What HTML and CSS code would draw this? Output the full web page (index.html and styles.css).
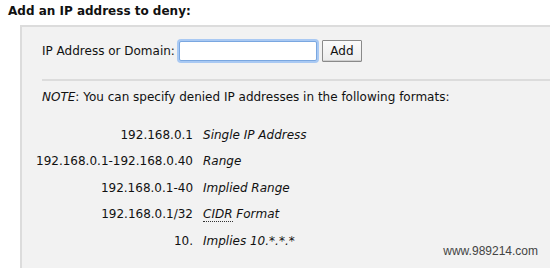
FILE: index.html
```html
<!DOCTYPE html>
<html>
<head>
<meta charset="utf-8">
<link rel="stylesheet" href="styles.css">
</head>
<body>
<h3 class="title">Add an IP address to deny:</h3>
<div class="panel">
  <div class="form-row">
    <label class="label">IP Address or Domain:</label>
    <input class="ip-input" type="text">
    <button class="add-btn">Add</button>
  </div>
  <hr class="rule">
  <p class="note"><em>NOTE</em>: You can specify denied IP addresses in the following formats:</p>
  <table class="formats">
    <tr><td class="ip">192.168.0.1</td><td class="desc">Single IP Address</td></tr>
    <tr><td class="ip">192.168.0.1-192.168.0.40</td><td class="desc">Range</td></tr>
    <tr><td class="ip">192.168.0.1-40</td><td class="desc">Implied Range</td></tr>
    <tr><td class="ip">192.168.0.1/32</td><td class="desc"><abbr class="abbr">CIDR</abbr> Format</td></tr>
    <tr><td class="ip">10.</td><td class="desc">Implies 10.*.*.*</td></tr>
  </table>
</div>
<div class="watermark">www.989214.com</div>
</body>
</html>
```
FILE: styles.css
```css
html, body {
  margin: 0;
  padding: 0;
  background: #fff;
  overflow: hidden;
}
body {
  font-family: "DejaVu Sans", Verdana, sans-serif;
  font-size: 12px;
  color: #111;
  width: 550px;
  height: 268px;
  position: relative;
  display: flex;
  flex-direction: column;
}
.title {
  margin: 0;
  padding: 4px 0 0 8px;
  font-size: 12px;
  font-weight: bold;
  height: 21px;
  line-height: 15px;
  flex: none;
}
.panel {
  flex: 1;
  min-height: 0;
  margin-left: 20px;
  border-top: 2px solid #dcdcdc;
  border-left: 2px solid #dcdcdc;
  background: #f2f2f2;
  padding: 12px 0 0 20px;
  overflow: hidden;
}
.form-row {
  display: flex;
  align-items: center;
  height: 24px;
}
.label {
  margin-right: 4px;
}
.ip-input {
  width: 136px;
  height: 18px;
  padding: 0;
  margin: 0;
  border: 1px solid #7aa7e0;
  box-shadow: 0 0 0 2px #a9c9f3;
  border-radius: 2px;
  background: #fff;
  outline: none;
}
.add-btn {
  margin-left: 5px;
  width: 40px;
  height: 22px;
  padding: 0;
  font-family: "DejaVu Sans", Verdana, sans-serif;
  font-size: 12px;
  color: #111;
  background: linear-gradient(#fbfbfb, #ececec);
  border: 1px solid #8a8a8a;
  border-radius: 1px;
  box-shadow: inset 0 -1px 0 #d0d0d0;
}
.rule {
  border: 0;
  border-top: 2px solid #dcdcdc;
  margin: 16px 0 0 0;
  height: 0;
}
.note {
  margin: 9px 0 0 0;
  line-height: 15px;
}
.formats {
  border-collapse: collapse;
  margin: 17px 0 0 -16px;
}
.formats td {
  padding: 0 0 0 10px;
  height: 26.5px;
  line-height: 15px;
  vertical-align: middle;
}
.ip {
  text-align: right;
  white-space: nowrap;
}
.desc {
  font-style: italic;
  white-space: nowrap;
}
.abbr {
  text-decoration: none;
  border-bottom: 1px dotted #333;
}
.watermark {
  position: absolute;
  right: 12px;
  bottom: 10px;
  font-family: "Liberation Sans", Arial, sans-serif;
  font-size: 12px;
  color: #444;
}
```
